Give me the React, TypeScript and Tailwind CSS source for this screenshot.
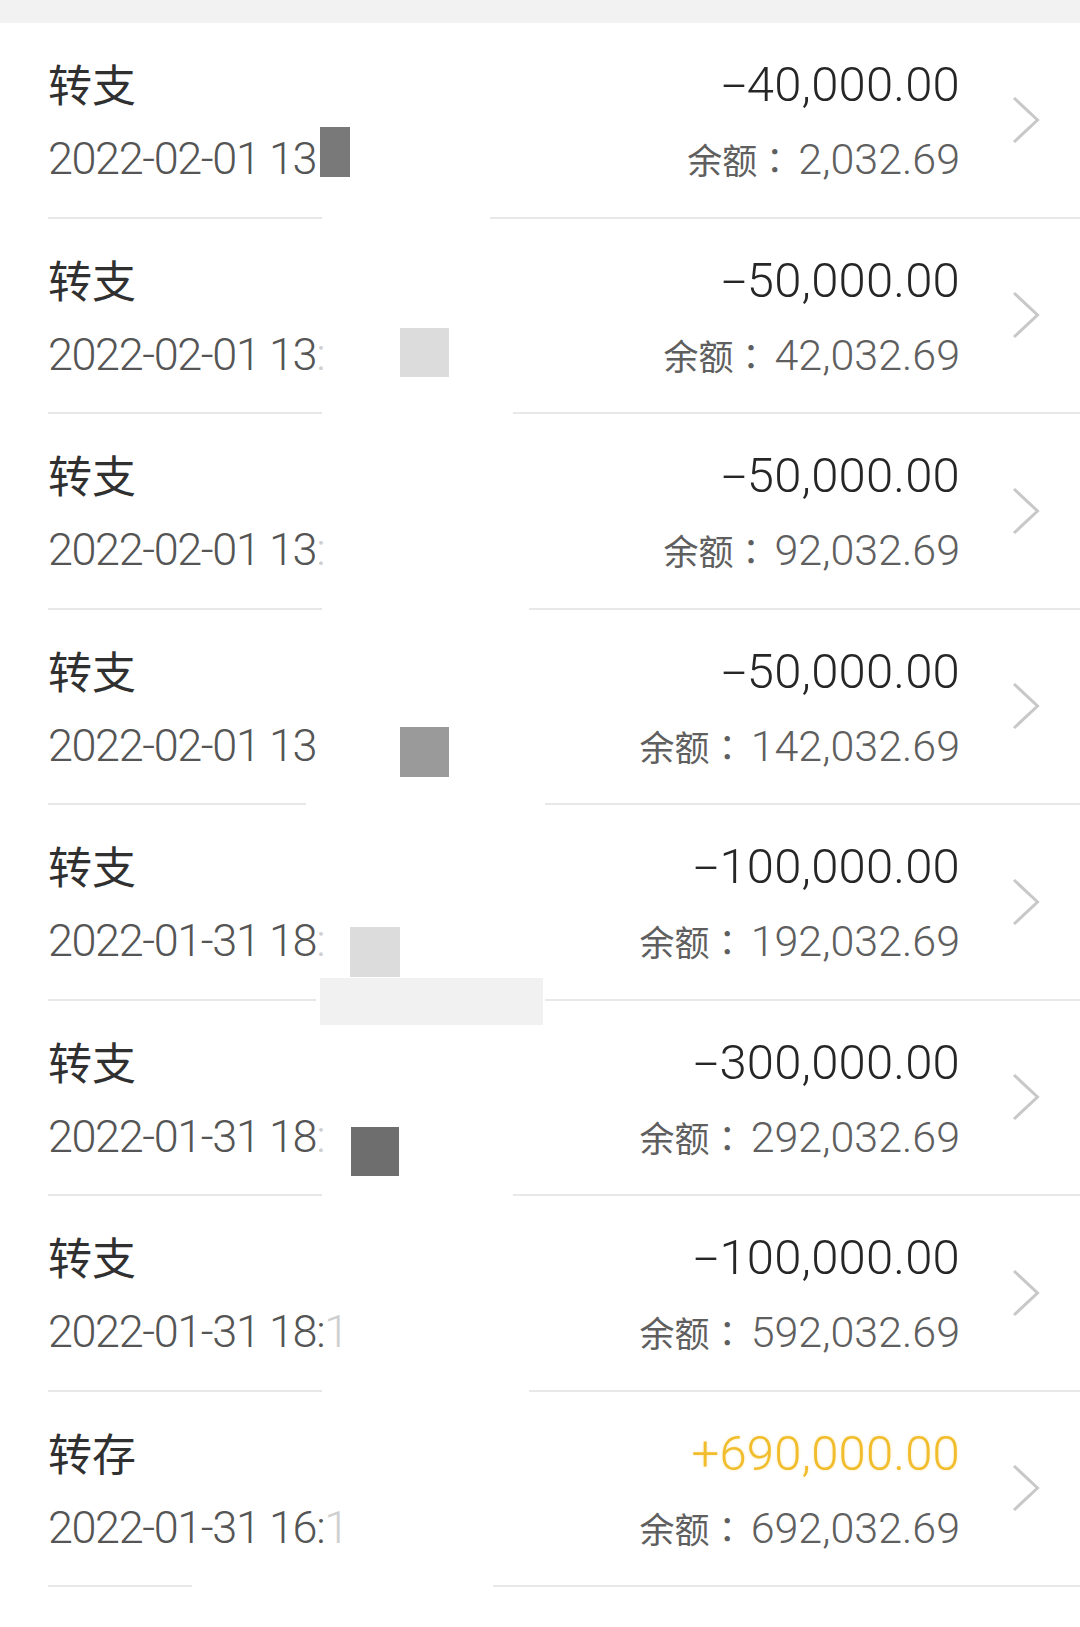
import { ReactNode } from 'react';

type Row = {
    title: string;
    date: string;
    faded?: string;
    amount: string;
    income?: boolean;
    balance: string;
    gap: [number, number];
    blocks?: { left: number; top: number; w: number; h: number; color: string }[];
};

const rows: Row[] = [
    {
        title: '转支',
        date: '2022-02-01 13',
        amount: '-40,000.00',
        balance: '2,032.69',
        gap: [274, 168],
        blocks: [{ left: 272, top: 104, w: 30, h: 50, color: '#797979' }],
    },
    {
        title: '转支',
        date: '2022-02-01 13',
        faded: ':',
        amount: '-50,000.00',
        balance: '42,032.69',
        gap: [274, 191],
        blocks: [{ left: 352, top: 109, w: 49, h: 49, color: '#dcdcdc' }],
    },
    {
        title: '转支',
        date: '2022-02-01 13',
        faded: ':',
        amount: '-50,000.00',
        balance: '92,032.69',
        gap: [274, 207],
    },
    {
        title: '转支',
        date: '2022-02-01 13',
        amount: '-50,000.00',
        balance: '142,032.69',
        gap: [258, 239],
        blocks: [{ left: 352, top: 117, w: 49, h: 50, color: '#9a9a9a' }],
    },
    {
        title: '转支',
        date: '2022-01-31 18',
        faded: ':',
        amount: '-100,000.00',
        balance: '192,032.69',
        gap: [268, 229],
        blocks: [
            { left: 302, top: 122, w: 50, h: 50, color: '#dcdcdc' },
            { left: 272, top: 173, w: 223, h: 47, color: '#f1f1f1' },
        ],
    },
    {
        title: '转支',
        date: '2022-01-31 18',
        faded: ':',
        amount: '-300,000.00',
        balance: '292,032.69',
        gap: [274, 191],
        blocks: [{ left: 303, top: 126, w: 48, h: 49, color: '#6e6e6e' }],
    },
    {
        title: '转支',
        date: '2022-01-31 18:',
        faded: '1',
        amount: '-100,000.00',
        balance: '592,032.69',
        gap: [274, 207],
    },
    {
        title: '转存',
        date: '2022-01-31 16:',
        faded: '1',
        amount: '+690,000.00',
        income: true,
        balance: '692,032.69',
        gap: [144, 301],
    },
];

function Chevron() {
    return (
        <svg width="28" height="48" viewBox="0 0 28 48" fill="none">
            <polyline
                points="2,2 25.5,24 2,46"
                stroke="#c8c8c8"
                strokeWidth="3"
                strokeLinejoin="miter"
            />
        </svg>
    );
}

function Line({ className, children }: { className: string; children: ReactNode }) {
    return <div className={`h-[48px] whitespace-nowrap leading-[48px] ${className}`}>{children}</div>;
}

function Amount({ value }: { value: string }) {
    const sign = value[0];
    const rest = value.slice(1);
    if (sign === '-') {
        // the app's minus sign is drawn wider than a plain hyphen
        return (
            <>
                <span className="ml-[8px] inline-block origin-right scale-x-[1.8]">-</span>
                {rest}
            </>
        );
    }
    return <>{value}</>;
}

function RecordRow({ row }: { row: Row }) {
    return (
        <div className="relative ml-[48px] flex h-[195.5px] items-center border-b-2 border-[#e8e8e8]">
            <div className="flex h-full flex-1 flex-col pt-[36px]">
                <Line className="font-['Noto_Sans_CJK_SC',sans-serif] text-[44px] text-[#303030]">
                    {row.title}
                </Line>
                <Line className="mt-[28px] font-[Roboto,sans-serif] text-[45px] font-light tracking-[-1.4px] text-[#555555]">
                    {row.date}
                    {row.faded && <span className="text-[#cfcfcf]">{row.faded}</span>}
                </Line>
            </div>
            <div className="flex h-full flex-col items-end pt-[38px]">
                <Line
                    className={`font-[Roboto,sans-serif] text-[49px] font-light tracking-[0.2px] ${
                        row.income
                            ? 'text-[#f2bd2c] [text-shadow:0_0_3px_rgba(242,189,44,0.35)]'
                            : 'text-[#262626]'
                    }`}
                >
                    <Amount value={row.amount} />
                </Line>
                <Line className="mt-[26px] font-[Roboto,sans-serif] text-[43px] font-light text-[#5f5f5f]">
                    <span className="font-['Noto_Sans_CJK_SC',sans-serif] text-[35px] font-normal">
                        余额
                    </span>
                    <span className="mr-[6px] font-['Noto_Sans_CJK_TC',sans-serif] text-[35px] font-normal">
                        ：
                    </span>
                    {row.balance}
                </Line>
            </div>
            <div className="flex w-[120px] shrink-0 pl-[52px]">
                <Chevron />
            </div>

            {/* redaction marks from the original screenshot */}
            <div
                className="absolute bottom-[-2px] h-[2px] bg-white"
                style={{ left: row.gap[0], width: row.gap[1] }}
            />
            {row.blocks?.map((b, i) => (
                <div
                    key={i}
                    className="absolute"
                    style={{ left: b.left, top: b.top, width: b.w, height: b.h, background: b.color }}
                />
            ))}
        </div>
    );
}

export default function App() {
    return (
        <div className="min-h-[1627px] w-[1080px] bg-white">
            <div className="h-[23px] bg-[#f2f2f2]" />
            {rows.map((row, i) => (
                <RecordRow key={i} row={row} />
            ))}
        </div>
    );
}
